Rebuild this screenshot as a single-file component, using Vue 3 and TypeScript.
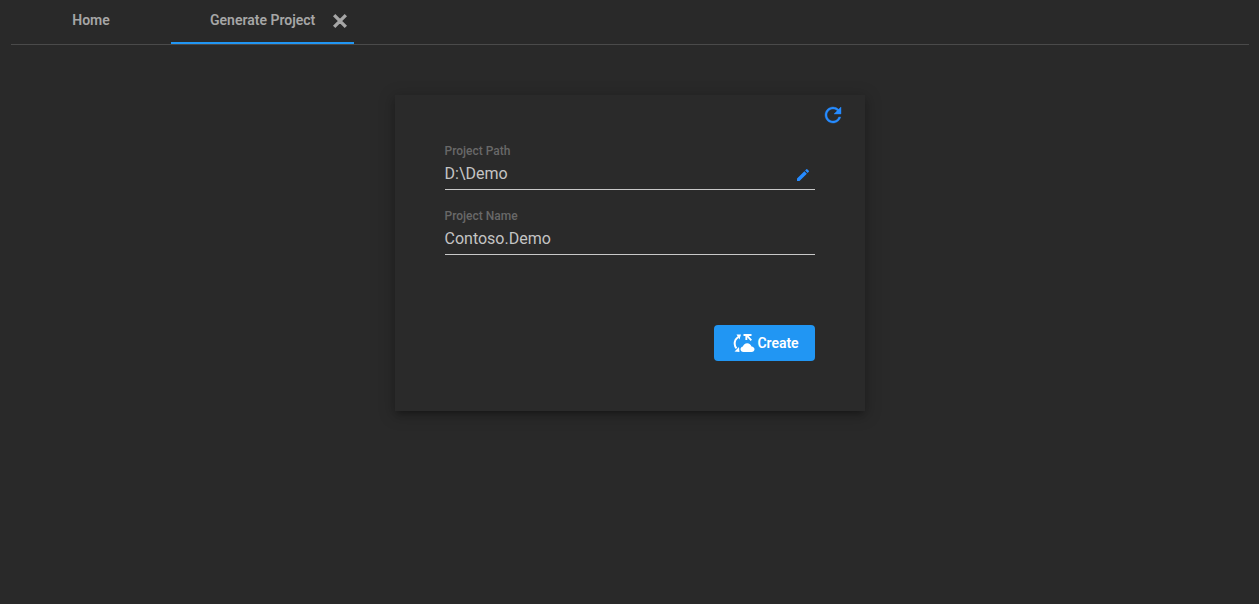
<script setup lang="ts">
const fields: { label: string; value: string; edit: boolean }[] = [
  { label: 'Project Path', value: 'D:\\Demo', edit: true },
  { label: 'Project Name', value: 'Contoso.Demo', edit: false },
]
</script>

<template>
  <div class="page">
    <nav class="tabs">
      <div class="tab home">Home</div>
      <div class="tab active">
        <span class="tab-title">Generate Project</span>
        <svg class="close" viewBox="0 0 24 24" width="20" height="20">
          <path fill="#a6a6a6" stroke="#a6a6a6" stroke-width="2" d="M19 6.41 17.59 5 12 10.59 6.41 5 5 6.41 10.59 12 5 17.59 6.41 19 12 13.41 17.59 19 19 17.59 13.41 12z" />
        </svg>
      </div>
    </nav>
    <main class="content">
      <section class="card">
        <div class="refresh-row">
          <svg viewBox="0 0 24 24" width="24" height="24">
            <path fill="#268bff" stroke="#268bff" stroke-width="0.4" d="M17.65 6.35A7.958 7.958 0 0 0 12 4c-4.42 0-7.99 3.58-7.99 8s3.57 8 7.99 8c3.73 0 6.84-2.55 7.73-6h-2.08A5.99 5.99 0 0 1 12 18c-3.31 0-6-2.69-6-6s2.69-6 6-6c1.66 0 3.14.69 4.22 1.78L13 11h7V4l-2.35 2.35z" />
          </svg>
        </div>
        <div v-for="f in fields" :key="f.label" class="field">
          <div class="label">{{ f.label }}</div>
          <div class="input">
            <span class="value">{{ f.value }}</span>
            <svg v-if="f.edit" class="pencil" viewBox="0 0 24 24" width="16" height="16">
              <path fill="#268bff" d="M3 17.25V21h3.75L17.81 9.94l-3.75-3.75L3 17.25zM20.71 7.04a1 1 0 0 0 0-1.41l-2.34-2.34a1 1 0 0 0-1.41 0l-1.83 1.83 3.75 3.75 1.83-1.83z" />
            </svg>
          </div>
        </div>
        <div class="actions">
          <button class="create" type="button">
            <svg viewBox="0 0 22 20" width="22" height="20">
              <path fill="none" stroke="#fff" stroke-width="2" d="M5.500 4C3 5.500 1.500 8 1.700 11c.1 1.800.7 3.200 1.800 4.400" />
              <path fill="#fff" d="M3.500 1.500 8 1.500 6.500 6.500zM1.500 18.500l5 .5-.5-5z" />
              <path fill="#fff" d="M10.500 1h8v1.900h-2.900l3.400 3.800-1.400 1.300-3.300-3.700v2.700h-1.900V2.900h-1.900z" />
              <path fill="#fff" d="M10.500 19C8.700 19 7.500 17.800 7.500 16.300c0-1.400 1-2.500 2.400-2.700.5-2 2.200-3.400 4.300-3.400 2.100 0 3.800 1.400 4.300 3.400 1.800.2 3 1.300 3 2.700S20.300 19 18.500 19z" />
            </svg>
            <span class="create-text">Create</span>
          </button>
        </div>
      </section>
    </main>
  </div>
</template>

<style>
html, body { margin: 0; background: #292929; }
</style>

<style scoped>
.page {
  height: 604px;
  background: #292929;
  font-family: Roboto, "Liberation Sans", sans-serif;
  overflow: hidden;
}
.tabs {
  display: flex;
  height: 44px;
  margin: 0 10px 0 11px;
  border-bottom: 1px solid #4a4a4a;
}
.tab {
  display: flex;
  align-items: center;
  height: 40px;
  font-size: 14px;
  font-weight: 600;
  color: #a6a6a6;
  white-space: nowrap;
}
.home {
  width: 160px;
  justify-content: center;
}
.active {
  position: relative;
  width: 183px;
  padding-left: 39px;
  box-sizing: border-box;
}
.active::after {
  content: "";
  position: absolute;
  left: 0;
  right: 0;
  top: 42px;
  height: 2px;
  background: #2196f3;
}
.tab-title { width: 105px; }
.close { margin-left: 15px; margin-top: 2px; }
.content {
  display: flex;
  justify-content: center;
  padding-top: 50px;
}
.card {
  width: 470px;
  height: 316px;
  box-sizing: border-box;
  padding: 8px 50px 0;
  background: #2a2a2a;
  box-shadow: 0 3px 14px 2px rgba(0, 0, 0, 0.22), 0 5px 6px -3px rgba(0, 0, 0, 0.3);
}
.refresh-row {
  display: flex;
  justify-content: flex-end;
  margin-right: -30px;
  height: 24px;
}
.refresh-row + .field { margin-top: 17px; }
.field { height: 65px; }
.label {
  font-size: 12px;
  font-weight: 500;
  line-height: 14px;
  color: #686868;
}
.input {
  display: flex;
  align-items: center;
  justify-content: space-between;
  height: 31px;
  padding-right: 4px;
  border-bottom: 1px solid #c8c8c8;
  font-size: 16px;
  color: #c4c4c4;
}
.pencil { margin-top: 3px; }
.actions {
  display: flex;
  justify-content: flex-end;
  margin-top: 51px;
}
.create {
  display: flex;
  align-items: center;
  gap: 3px;
  width: 101px;
  height: 36px;
  padding: 0 0 0 19px;
  border: 0;
  border-radius: 4px;
  background: #2196f3;
  color: #fff;
  font-family: inherit;
  font-size: 14px;
  font-weight: 600;
}
.create-text { margin-top: -1px; letter-spacing: -0.05px; }
</style>
